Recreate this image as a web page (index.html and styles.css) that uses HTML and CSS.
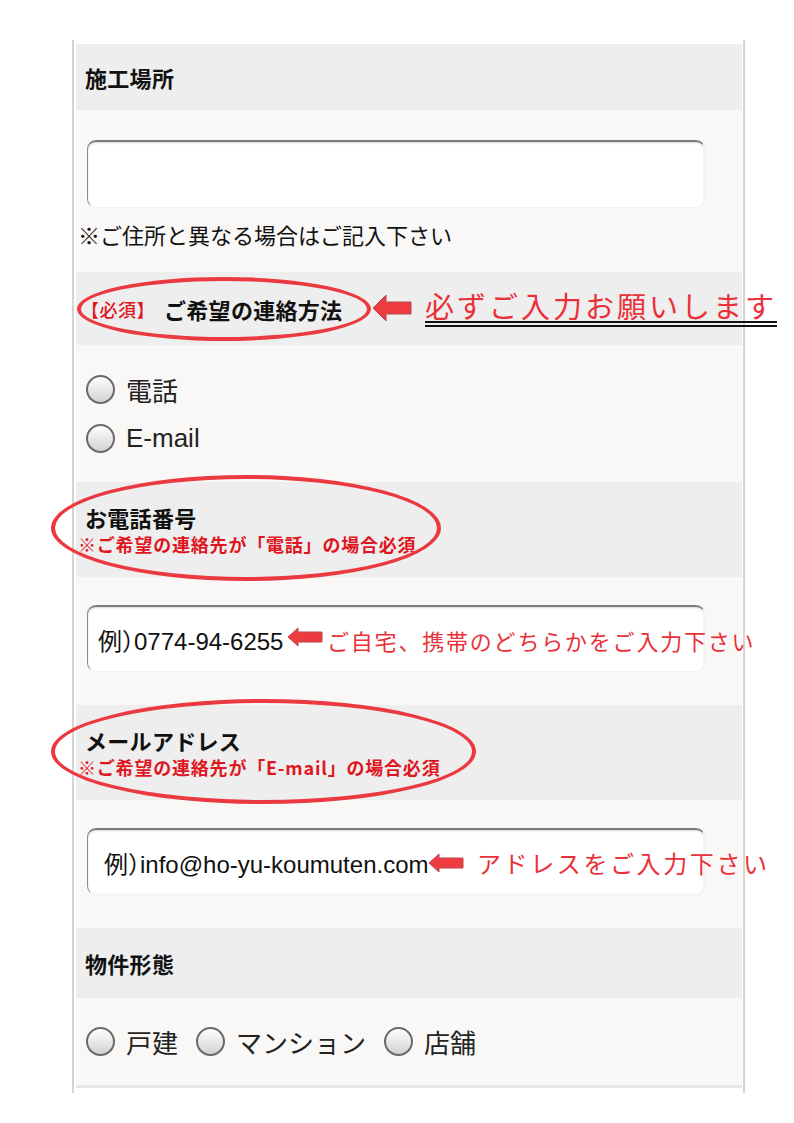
FILE: index.html
```html
<!DOCTYPE html>
<html lang="ja">
<head>
<meta charset="UTF-8">
<meta name="viewport" content="width=device-width, initial-scale=1.0">
<title>お問い合わせフォーム</title>
<link rel="stylesheet" href="styles.css">
</head>
<body>
<div class="form">
    <div class="head h-short"><span class="title">施工場所</span></div>
    <div class="body b-place">
        <input type="text" class="field">
        <p class="note">※ご住所と異なる場合はご記入下さい</p>
    </div>

    <div class="head h-contact"><span class="req">【必須】</span><span class="title">ご希望の連絡方法</span></div>
    <div class="body b-radios">
        <label class="opt"><input type="radio" name="contact"><span>電話</span></label>
        <label class="opt"><input type="radio" name="contact"><span>E-mail</span></label>
    </div>

    <div class="head h-tall">
        <span class="title">お電話番号</span>
        <span class="sub">※ご希望の連絡先が「電話」の場合必須</span>
    </div>
    <div class="body b-field">
        <input type="text" class="field example" value="例）0774-94-6255">
    </div>

    <div class="head h-tall">
        <span class="title">メールアドレス</span>
        <span class="sub">※ご希望の連絡先が「E-mail」の場合必須</span>
    </div>
    <div class="body b-field">
        <input type="text" class="field example mail" value="例）info@ho-yu-koumuten.com">
    </div>

    <div class="head h-type"><span class="title">物件形態</span></div>
    <div class="body b-type">
        <label class="opt"><input type="radio" name="type"><span>戸建</span></label>
        <label class="opt"><input type="radio" name="type"><span>マンション</span></label>
        <label class="opt"><input type="radio" name="type"><span>店舗</span></label>
    </div>
    <div class="foot"></div>
</div>

<!-- annotations drawn over the form -->
<div class="ring ring1"></div>
<div class="ring ring2"></div>
<div class="ring ring3"></div>

<svg class="arrow arrow1" width="40" height="28" viewBox="0 0 40 28"><polygon points="1,14 14,1 14,8 39,8 39,20 14,20 14,27" /></svg>
<span class="memo memo1">必ずご入力お願いします</span>

<svg class="arrow arrow2" width="36" height="20" viewBox="0 0 36 20"><polygon points="1,10 11,1 11,5 35,5 35,15 11,15 11,19" /></svg>
<span class="memo memo2">ご自宅、携帯のどちらかをご入力下さい</span>

<svg class="arrow arrow3" width="36" height="20" viewBox="0 0 36 20"><polygon points="1,10 11,1 11,5 35,5 35,15 11,15 11,19" /></svg>
<span class="memo memo3">アドレスをご入力下さい</span>
</body>
</html>
```

FILE: styles.css
```css
body {
    margin: 0;
    background: #fff;
    font-family: "Noto Sans CJK JP", sans-serif;
    color: #111;
    position: relative;
}
.form {
    margin: 40px 0 0 72px;
    width: 666px;
    padding: 4px 1px 5px 2px;
    border-left: 2px solid #d4d4d4;
    border-right: 2px solid #d4d4d4;
}
.head {
    background: #eeeeee;
    padding-left: 9px;
    display: flex;
    align-items: center;
}
.body {
    background: #f9f8f7;
}
.title {
    font-size: 22px;
    font-weight: bold;
    letter-spacing: 0.3px;
}
.req {
    color: #e0161e;
    font-size: 18px;
    font-weight: 500;
    letter-spacing: 0.5px;
    margin: 0 9px 0 -4px;
}
.h-short {
    height: 66px;
}
.h-contact {
    height: 73px;
}
.h-type {
    height: 70px;
}
.h-tall {
    height: 95px;
    box-sizing: border-box;
    flex-direction: column;
    align-items: flex-start;
    padding-top: 21px;
    padding-left: 9px;
}
.h-tall .title {
    line-height: 28px;
}
.sub {
    color: #e0161e;
    font-size: 18px;
    font-weight: bold;
    letter-spacing: 0.8px;
    line-height: 22px;
    margin: 2px 0 0 -7px;
}
.field {
    display: block;
    box-sizing: border-box;
    width: 618px;
    height: 68px;
    margin-left: 11px;
    padding: 0 10px;
    background: #fff;
    border: 1px solid #f1f1f1;
    border-top: 2px solid #7a7a7a;
    border-left: 1px solid #8c8c8c;
    border-radius: 9px;
    box-shadow: inset 0 1px 2px rgba(0, 0, 0, 0.15);
    font-family: "Liberation Sans", "Noto Sans CJK JP", sans-serif;
    font-feature-settings: "halt";
    font-size: 24px;
    color: #111;
}
.field.mail {
    padding-left: 16px;
}
.b-place {
    height: 162px;
    box-sizing: border-box;
    padding-top: 30px;
}
.note {
    margin: 12px 0 0 2px;
    font-size: 22px;
    line-height: 28px;
}
.b-field {
    height: 128px;
    box-sizing: border-box;
    padding-top: 28px;
}
.b-field .field {
    height: 67px;
}
.b-radios {
    height: 137px;
    box-sizing: border-box;
    padding: 20px 0 0 10px;
    display: flex;
    flex-direction: column;
}
.b-radios .opt {
    height: 49px;
}
.b-type {
    height: 87px;
    box-sizing: border-box;
    padding: 0 0 0 10px;
    display: flex;
    align-items: center;
    gap: 18px;
}
.opt {
    display: flex;
    align-items: center;
    font-family: "Liberation Sans", "Noto Sans CJK JP", sans-serif;
    font-size: 26px;
    color: #222;
}
.opt input {
    appearance: none;
    -webkit-appearance: none;
    width: 29px;
    height: 29px;
    margin: 0 11px 0 0;
    border: 2px solid #6a6a6a;
    border-radius: 50%;
    box-sizing: border-box;
    background: linear-gradient(#ffffff, #d2d2d2);
}
.foot {
    height: 3px;
    background: #e8e8e8;
}

.ring {
    position: absolute;
    border: 4px solid #ea3a40;
    border-radius: 50%;
    box-sizing: border-box;
}
.ring1 {
    left: 77px;
    top: 277px;
    width: 294px;
    height: 64px;
}
.ring2 {
    left: 51px;
    top: 475px;
    width: 390px;
    height: 106px;
}
.ring3 {
    left: 51px;
    top: 699px;
    width: 425px;
    height: 105px;
}
.arrow {
    position: absolute;
}
.arrow polygon {
    fill: #ee3b3f;
    stroke: #b9484b;
    stroke-width: 1;
}
.arrow1 {
    left: 372px;
    top: 294px;
}
.arrow2 {
    left: 287px;
    top: 627px;
}
.arrow3 {
    left: 428px;
    top: 853px;
}
.memo {
    position: absolute;
    color: #ea3038;
    font-family: "Noto Sans CJK JP", sans-serif;
    font-weight: 400;
    white-space: nowrap;
}
.memo1 {
    left: 425px;
    top: 285px;
    font-size: 29px;
    letter-spacing: 3px;
    line-height: 40px;
    text-decoration: underline double #111;
    text-underline-offset: 3px;
}
.memo2 {
    left: 327px;
    top: 624px;
    font-size: 22px;
    letter-spacing: 1.8px;
    line-height: 32px;
}
.memo3 {
    left: 477px;
    top: 846px;
    font-size: 24px;
    letter-spacing: 2.6px;
    line-height: 34px;
}
```
